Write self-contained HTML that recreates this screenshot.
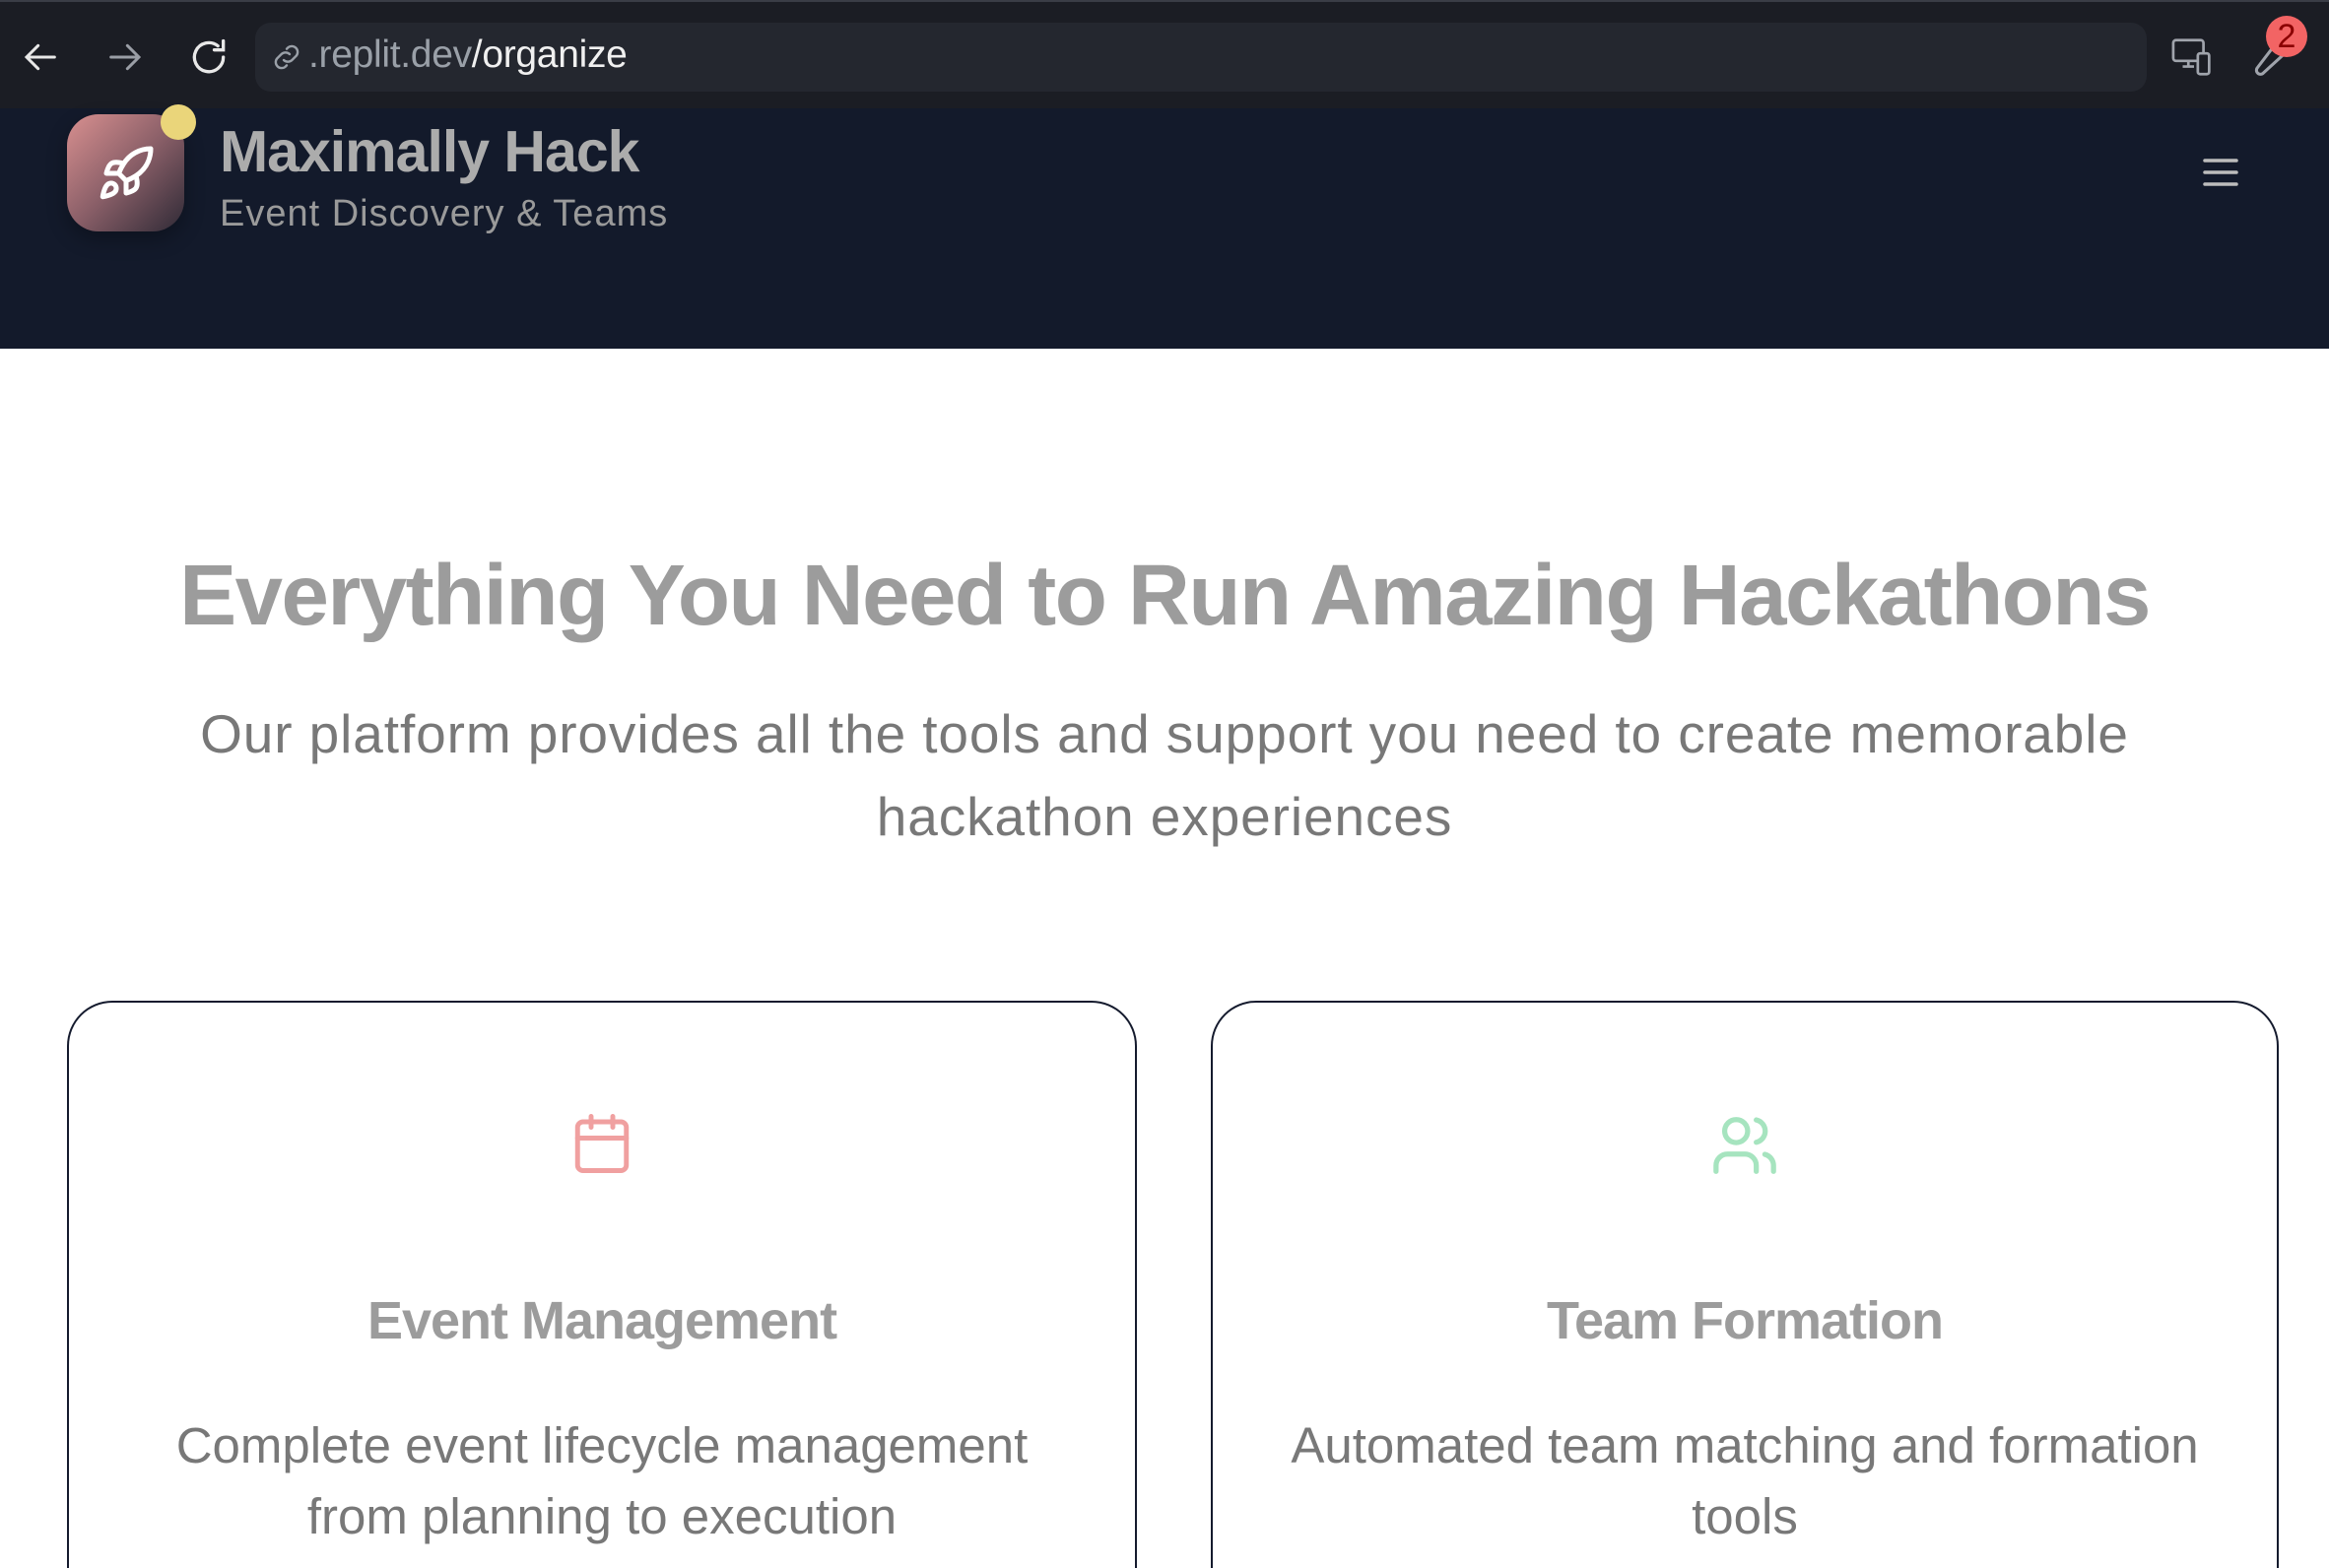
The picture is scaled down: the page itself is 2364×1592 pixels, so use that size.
<!DOCTYPE html>
<html><head><meta charset="utf-8"><style>
*{margin:0;padding:0;box-sizing:border-box}
html{width:2364px;height:1592px;overflow:hidden}
body{width:2364px;height:1592px;overflow:hidden;background:#fff;font-family:"Liberation Sans",sans-serif;position:relative}
.chrome{position:absolute;left:0;top:0;width:2364px;height:110px;background:#1b1d24;border-top:2px solid #3a3d46}
.url{position:absolute;left:259px;top:21px;width:1920px;height:70px;background:#24272f;border-radius:16px}
.url span{position:absolute;left:54px;top:11px;font-size:39px;color:#9aa0a8;letter-spacing:-0.3px}
.nav{position:absolute;left:0;top:110px;width:2364px;height:244px;background:#131a2b}
.logo{position:absolute;left:68px;top:116px;width:119px;height:119px;border-radius:32px;background:linear-gradient(135deg,#d99090 0%,#8a5f68 50%,#2f2a36 100%);box-shadow:0 8px 20px rgba(0,0,0,.3)}
.dot{position:absolute;left:163px;top:106px;width:36px;height:36px;border-radius:50%;background:#ead57a}
.t1{position:absolute;left:223px;top:120px;font-size:59px;font-weight:bold;color:#acacac;letter-spacing:-1px}
.t2{position:absolute;left:223px;top:196px;font-size:38px;color:#9a9a9a;letter-spacing:1px}
.h1{position:absolute;left:0;width:2364px;top:555px;text-align:center;font-size:87px;font-weight:bold;color:#9c9c9c;letter-spacing:-1.5px}
.p{position:absolute;left:0;width:2364px;top:703px;text-align:center;font-size:55px;line-height:84px;color:#787878;letter-spacing:0.9px}
.card{position:absolute;top:1016px;height:600px;border:2.5px solid #151b2e;border-bottom:none;border-radius:46px 46px 0 0}
.ct{position:absolute;top:1310px;text-align:center;font-size:54px;font-weight:bold;color:#9c9c9c;letter-spacing:-1px}
.cd{position:absolute;top:1432px;text-align:center;font-size:51px;line-height:72px;color:#787878}
</style></head><body>
<div class="chrome">
<svg style="position:absolute;left:22px;top:36px" width="40" height="40" viewBox="0 0 24 24" fill="none" stroke="#e8e8e8" stroke-width="1.8" stroke-linecap="round"><path d="M20 12H4M10 5l-7 7 7 7"/></svg>
<svg style="position:absolute;left:106px;top:36px" width="40" height="40" viewBox="0 0 24 24" fill="none" stroke="#9a9ea6" stroke-width="1.8" stroke-linecap="round"><path d="M4 12h16M14 5l7 7-7 7"/></svg>
<svg style="position:absolute;left:190px;top:34px" width="44" height="44" viewBox="0 0 24 24" fill="none" stroke="#e8e8e8" stroke-width="1.8" stroke-linecap="round"><path d="M20 12a8 8 0 1 1-3-6.2M20 3v5h-5"/></svg>
<div class="url"><svg style="position:absolute;left:14px;top:17px" width="36" height="36" viewBox="0 0 24 24" fill="none" stroke="#9aa0a8" stroke-width="1.6" stroke-linecap="round"><path d="M10 14a4 4 0 0 0 5.6 0l3-3a4 4 0 0 0-5.6-5.6l-1 1M14 10a4 4 0 0 0-5.6 0l-3 3a4 4 0 0 0 5.6 5.6l1-1"/></svg><span>.replit.dev<b style="font-weight:normal;color:#f0f0f0">/organize</b></span></div>
<svg style="position:absolute;left:2204px;top:36px" width="46" height="40" viewBox="0 0 24 20" fill="none" stroke="#a0a4ac" stroke-width="1.4"><rect x="1" y="1" width="16" height="11" rx="1.5"/><path d="M6 15h6M9 12v3"/><rect x="14" y="8" width="6" height="11" rx="1.2" fill="#1b1d24"/></svg>
<svg style="position:absolute;left:2282px;top:30px" width="46" height="46" viewBox="0 0 24 24" fill="none" stroke="#a0a4ac" stroke-width="1.6"><path d="M14.7 6.3a4 4 0 0 0 5 5L8 22a2 2 0 0 1-3-3z"/></svg>
<div style="position:absolute;left:2300px;top:14px;width:42px;height:42px;border-radius:50%;background:#f26464;color:#8a0000;font-size:34px;text-align:center;line-height:42px">2</div>
</div>
<div class="nav"></div>
<div class="logo"><svg style="position:absolute;left:30px;top:30px" width="60" height="60" viewBox="0 0 24 24" fill="none" stroke="#fff" stroke-width="2" stroke-linecap="round" stroke-linejoin="round"><path d="M4.5 16.5c-1.5 1.3-2 5-2 5s3.7-.5 5-2c.7-.8.7-2.1-.1-2.9a2.2 2.2 0 0 0-2.9-.1z"/><path d="M12 15l-3-3a22 22 0 0 1 2-3.9A12.9 12.9 0 0 1 22 2c0 2.7-.8 7.5-6 11a22.4 22.4 0 0 1-4 2z"/><path d="M9 12H4s.6-3 2-4c1.6-1.1 5 0 5 0M12 15v5s3-.6 4-2c1.1-1.6 0-5 0-5"/></svg></div>
<div class="dot"></div>
<div class="t1">Maximally Hack</div>
<div class="t2">Event Discovery &amp; Teams</div>
<svg style="position:absolute;left:2236px;top:160px" width="36" height="32" viewBox="0 0 36 32" stroke="#bdbdbd" stroke-width="3.5" stroke-linecap="round"><path d="M2 3h32M2 15h32M2 27h32"/></svg>
<div class="h1">Everything You Need to Run Amazing Hackathons</div>
<div class="p">Our platform provides all the tools and support you need to create memorable<br>hackathon experiences</div>
<div class="card" style="left:68px;width:1086px;height:576px"></div>
<div class="card" style="left:1229px;width:1084px;height:576px"></div>
<svg style="position:absolute;left:578px;top:1128px" width="66" height="66" viewBox="0 0 24 24" fill="none" stroke="#f0a0a0" stroke-width="1.8" stroke-linecap="round"><rect x="3" y="4" width="18" height="18" rx="2"/><path d="M16 2v4M8 2v4M3 10h18"/></svg>
<svg style="position:absolute;left:1736px;top:1128px" width="70" height="70" viewBox="0 0 24 24" fill="none" stroke="#a6e4bf" stroke-width="1.8" stroke-linecap="round"><path d="M16 21v-2a4 4 0 0 0-4-4H6a4 4 0 0 0-4 4v2"/><circle cx="9" cy="7" r="4"/><path d="M22 21v-2a4 4 0 0 0-3-3.9M16 3.1a4 4 0 0 1 0 7.8"/></svg>
<div class="ct" style="left:68px;width:1086px">Event Management</div>
<div class="ct" style="left:1229px;width:1084px">Team Formation</div>
<div class="cd" style="left:68px;width:1086px">Complete event lifecycle management<br>from planning to execution</div>
<div class="cd" style="left:1229px;width:1084px">Automated team matching and formation<br>tools</div>
</body></html>
